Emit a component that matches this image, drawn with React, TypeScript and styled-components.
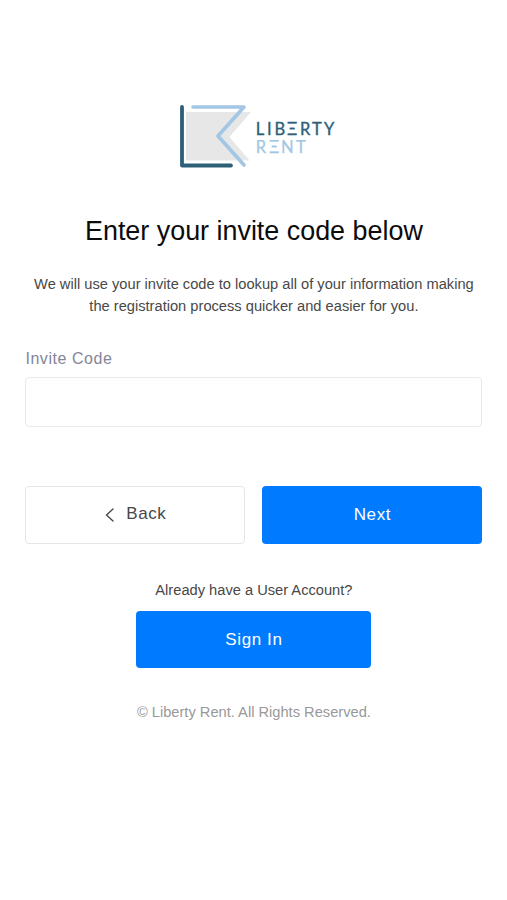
import React from "react";
import styled, { createGlobalStyle } from "styled-components";

const GlobalStyle = createGlobalStyle`
  * { box-sizing: border-box; }
  body {
    margin: 0;
    background: #fff;
    font-family: "Liberation Sans", Arial, sans-serif;
  }
`;

const Page = styled.main`
  min-height: 900px;
  padding: 98px 24.6px 0 25.4px;
  display: flex;
  flex-direction: column;
  align-items: center;
  color: #484848;
`;

const Logo = styled.svg`
  display: block;
  width: 170px;
  height: 76px;
`;

const Title = styled.h1`
  margin: 41px 0 0;
  font-size: 26.9px;
  line-height: 32px;
  font-weight: 400;
  color: #0c0c0c;
  white-space: nowrap;
`;

const Intro = styled.p`
  margin: 26px 0 0;
  font-size: 14.67px;
  line-height: 22px;
  text-align: center;
  white-space: nowrap;
`;

const Form = styled.form`
  width: 457px;
  margin-top: 32px;
  display: flex;
  flex-direction: column;
`;

const Label = styled.label`
  font-size: 16px;
  line-height: 20px;
  letter-spacing: 0.55px;
  color: #83859a;
`;

const Input = styled.input`
  height: 50px;
  margin-top: 8px;
  padding: 0 16px;
  border: 1.5px solid #e6eaed;
  border-radius: 4px;
  font: inherit;
  font-size: 16px;
  outline: none;
`;

const Actions = styled.div`
  display: grid;
  grid-template-columns: 1fr 1fr;
  gap: 17px;
  margin-top: 59px;
`;

const Button = styled.button<{ $outline?: boolean; $width?: number }>`
  display: flex;
  align-items: center;
  justify-content: center;
  gap: 11px;
  width: ${(p) => (p.$width ? `${p.$width}px` : "auto")};
  height: 57.5px;
  padding: ${(p) => (p.$outline ? "0 0 2px" : "1px 0 0")};
  border: ${(p) => (p.$outline ? "1.5px solid #e4e5e6" : "0")};
  border-radius: 4px;
  background: ${(p) => (p.$outline ? "#fff" : "#007bff")};
  color: ${(p) => (p.$outline ? "#484848" : "#fff")};
  font-family: inherit;
  font-size: 17px;
  letter-spacing: 0.6px;
`;

const Chevron = styled.svg`
  width: 11px;
  height: 16px;
  margin-top: 2px;
`;

const Prompt = styled.p`
  margin: 36px 0 0;
  font-size: 14.67px;
  line-height: 20px;
`;

const SignIn = styled.div`
  margin-top: 11px;
`;

const Footer = styled.footer`
  margin-top: 34px;
  font-size: 14.67px;
  line-height: 20px;
  color: #999;
`;

const Wordmark = styled.text`
  font-family: Lato, sans-serif;
  font-size: 16.5px;
`;

export default function App() {
  return (
    <>
      <GlobalStyle />
      <Page>
        <Logo viewBox="0 0 170 76" role="img" aria-label="Liberty Rent">
          <path d="M17 14H82L60.5 39L80.5 62.5H17Z" fill="#e7e7e7" />
          <path d="M24 9H75L49 38L75 67" fill="none" stroke="#a2c6e3" strokeWidth="3.6" strokeLinecap="round" strokeLinejoin="round" />
          <path d="M13 9V67.5H62" fill="none" stroke="#2d6078" strokeWidth="3.8" strokeLinecap="round" strokeLinejoin="round" />
          <Wordmark x="86.8 98 105.5 118 131 143 155" y="37" fill="#2d6078" stroke="#2d6078" strokeWidth="0.35">LIBΞRTY</Wordmark>
          <Wordmark x="86.8 100 112 127" y="54.5" fill="#a2c6e3" stroke="#a2c6e3" strokeWidth="0.25">RΞNT</Wordmark>
        </Logo>
        <Title>Enter your invite code below</Title>
        <Intro>
          We will use your invite code to lookup all of your information making
          <br />
          the registration process quicker and easier for you.
        </Intro>
        <Form onSubmit={(e) => e.preventDefault()}>
          <Label htmlFor="invite">Invite Code</Label>
          <Input id="invite" type="text" />
          <Actions>
            <Button type="button" $outline>
              <Chevron viewBox="0 0 11 16" fill="none">
                <path d="M9 2L2.5 8L9 14" stroke="#484848" strokeWidth="1.4" strokeLinecap="round" strokeLinejoin="round" />
              </Chevron>
              Back
            </Button>
            <Button type="submit">Next</Button>
          </Actions>
        </Form>
        <Prompt>Already have a User Account?</Prompt>
        <SignIn>
          <Button type="button" $width={235}>Sign In</Button>
        </SignIn>
        <Footer>© Liberty Rent. All Rights Reserved.</Footer>
      </Page>
    </>
  );
}
